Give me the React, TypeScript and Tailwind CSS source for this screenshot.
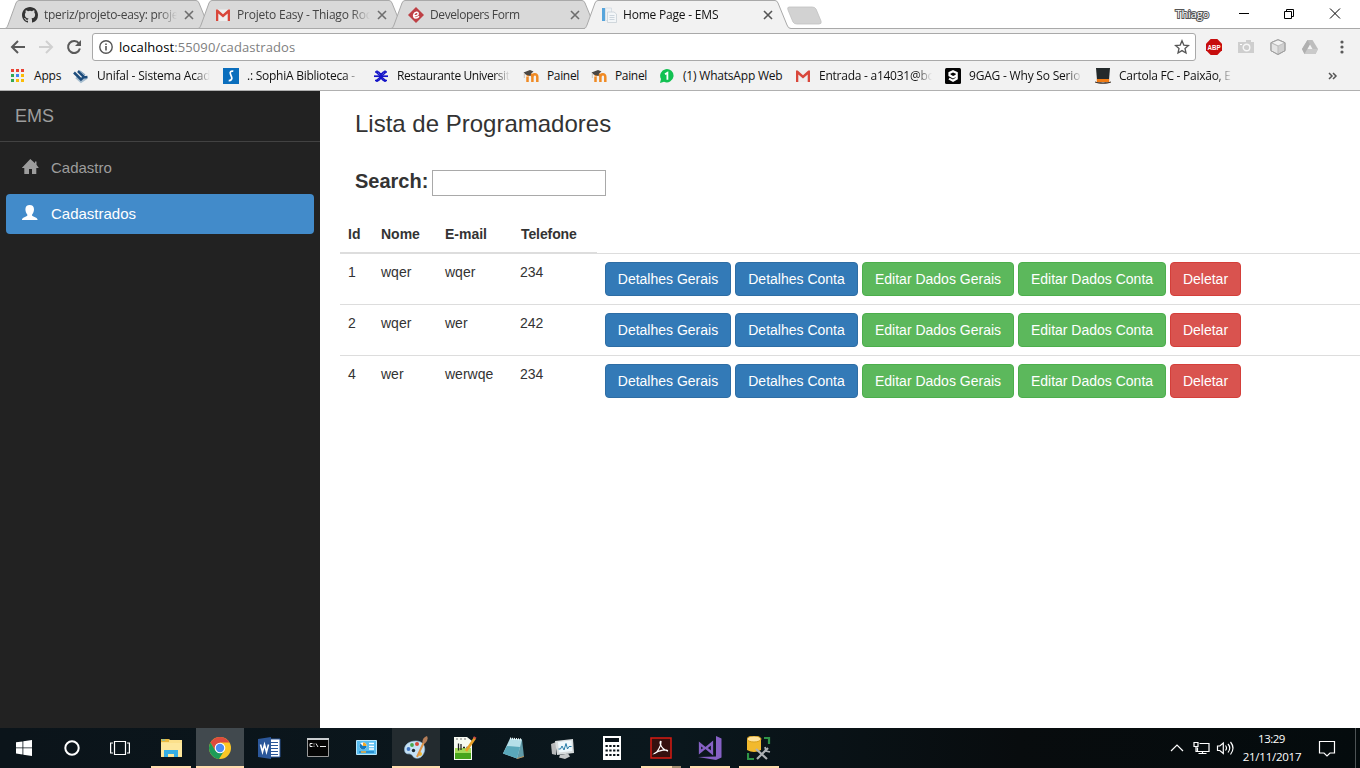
import type { ReactNode } from "react";

const UI = "font-['Open_Sans','Noto_Sans',sans-serif]";
const FADE = "[mask-image:linear-gradient(to_right,black_86%,transparent_100%)]";

/* ---------- favicons ---------- */

function GithubIcon() {
  return (
    <svg width="16" height="16" viewBox="0 0 16 16" fill="#333">
      <path d="M8 0C3.58 0 0 3.58 0 8c0 3.54 2.29 6.53 5.47 7.59.4.07.55-.17.55-.38 0-.19-.01-.82-.01-1.49-2.01.37-2.53-.49-2.69-.94-.09-.23-.48-.94-.82-1.13-.28-.15-.68-.52-.01-.53.63-.01 1.08.58 1.23.82.72 1.21 1.87.87 2.33.66.07-.52.28-.87.51-1.07-1.78-.2-3.64-.89-3.64-3.95 0-.87.31-1.59.82-2.15-.08-.2-.36-1.02.08-2.12 0 0 .67-.21 2.2.82a7.6 7.6 0 0 1 4 0c1.53-1.04 2.2-.82 2.2-.82.44 1.1.16 1.92.08 2.12.51.56.82 1.27.82 2.15 0 3.07-1.87 3.75-3.65 3.95.29.25.54.73.54 1.48 0 1.07-.01 1.93-.01 2.2 0 .21.15.46.55.38A8.01 8.01 0 0 0 16 8c0-4.42-3.58-8-8-8z" />
    </svg>
  );
}

function GmailIcon() {
  return (
    <svg width="16" height="16" viewBox="0 0 16 16">
      <path d="M1 2.500h14v11.500H1z" fill="#eee" />
      <path d="M1 14V2.500h1.700L8 7.200l5.300-4.700H15V14h-2.300V6.400L8 10.500 3.300 6.400V14z" fill="#d9473b" />
    </svg>
  );
}

function DiamondIcon() {
  return (
    <svg width="16" height="16" viewBox="0 0 16 16">
      <path d="M8 0l8 8-8 8-8-8z" fill="#be4045" />
      <path d="M5.600 8.700c2.400.3 4.900-.5 4.600-2.400-.3-1.600-3.200-1.200-4.200.8-1 2 0 4 2 3.900 1.300-.1 2.300-.9 3-1.700" fill="none" stroke="#fff" strokeWidth="1.500" />
    </svg>
  );
}

function PageIcon() {
  return (
    <svg width="16" height="16" viewBox="0 0 16 16">
      <path d="M1 1h3v13H1z" fill="#56a5dc" />
      <path d="M4.500 1h6v12.500h-6z" fill="#eef2f5" stroke="#d3dbe2" strokeWidth=".8" />
      <path d="M6.500 5H13l2.500 2v8.500h-9z" fill="#f3f6f8" stroke="#c6cfd6" strokeWidth=".8" />
      <path d="M8.500 8.500h5M8.500 10.500h5M8.500 12.500h5" stroke="#ccd5dd" />
    </svg>
  );
}

function AppsIcon() {
  const colors = ["#ea4335", "#ea4335", "#ea4335", "#34a853", "#4285f4", "#fbbc05", "#34a853", "#fbbc05", "#fbbc05"];
  return (
    <svg width="16" height="16" viewBox="0 0 16 16">
      {colors.map((c, i) => (
        <rect key={i} x={1 + (i % 3) * 5} y={1 + Math.floor(i / 3) * 5} width="3" height="3" fill={c} />
      ))}
    </svg>
  );
}

function UnifalIcon() {
  return (
    <svg width="16" height="16" viewBox="0 0 16 16">
      <path d="M3 9.500l5 4.500 6-4" fill="none" stroke="#a9bfd0" strokeWidth="2" />
      <path d="M1 4.500l7 7 3-2.500-6-6M10 9.500L14.500 9" fill="none" stroke="#1d4c7c" strokeWidth="2.500" />
      <path d="M7 3l5 4" stroke="#7d9db8" strokeWidth="1.200" />
    </svg>
  );
}

function SophiaIcon() {
  return (
    <svg width="16" height="16" viewBox="0 0 16 16">
      <path d="M0 0h16v16H0z" fill="#0a6ebd" />
      <path d="M10.300 3.200C8 2.600 6.600 4 7.400 6l1.300 3.200c.6 1.800-.6 3.500-3 3.400" fill="none" stroke="#fff" strokeWidth="1.700" />
    </svg>
  );
}

function RestaurantIcon() {
  return (
    <svg width="16" height="16" viewBox="0 0 16 16" stroke="#1414c8" fill="none">
      <path d="M2 4h3.500L8 6.500 10.500 4H14M2 12.500h3.500L8 10l2.500 2.500H14" strokeWidth="1.700" />
      <path d="M4 2.500v2.500l8 7v2M12 2.500v2.500l-8 7v2" strokeWidth="1.600" />
      <path d="M1 8.200h14" strokeWidth="1.700" />
    </svg>
  );
}

function MoodleIcon() {
  return (
    <svg width="16" height="16" viewBox="0 0 16 16">
      <path d="M4.500 14V8.500M9.400 14V9M14.300 14V9c0-4-4.900-3.500-4.900 0 0-3.500-4.200-3.500-4.900-1" fill="none" stroke="#f08a24" strokeWidth="2.500" />
      <path d="M.5 4.500L7 2l3.500 1.500L8 5.500 7.500 8 3 6.800z" fill="#4a4744" />
      <path d="M1.300 5v5" stroke="#c5b9aa" strokeWidth=".8" />
    </svg>
  );
}

function WhatsAppIcon() {
  return (
    <svg width="16" height="16" viewBox="0 0 16 16">
      <path d="M1 15l1-4A6.700 6.700 0 1 1 5 13.800z" fill="#12c152" />
      <path d="M6 6.300l2.400-1.500V11.700" fill="none" stroke="#fff" strokeWidth="1.800" />
    </svg>
  );
}

function NineGagIcon() {
  return (
    <svg width="16" height="16" viewBox="0 0 16 16">
      <rect width="16" height="16" rx="1.500" fill="#050505" />
      <path d="M11.700 7.500L8 9.200 4.500 7.300V5L8 3.200 11.700 5v5.500L8 12.700 4 10.600" fill="none" stroke="#fff" strokeWidth="2.200" />
    </svg>
  );
}

function HatIcon() {
  return (
    <svg width="16" height="16" viewBox="0 0 16 16">
      <path d="M1 0h14l-1 12H2z" fill="#242a2b" />
      <path d="M1.800 11h12.400v3H1.800z" fill="#f07a12" />
      <path d="M0 13.500c4 1.200 12 1.200 16 0v1c-4 1.800-12 1.800-16 0z" fill="#3a2a20" />
    </svg>
  );
}

/* ---------- tab strip ---------- */

function CloseGlyph({ dark }: { dark?: boolean }) {
  return (
    <svg width="10" height="10" viewBox="0 0 10 10" stroke={dark ? "#555" : "#6e6e6e"} strokeWidth="1.600">
      <path d="M1 1l8 8M9 1L1 9" />
    </svg>
  );
}

function Tab({ icon, title, active, tracking }: { icon: ReactNode; title: string; active?: boolean; tracking: string }) {
  return (
    <div className={`relative h-[29px] w-[193px] shrink-0 ${active ? "z-10" : ""}`}>
      <svg className="absolute left-0 top-0 overflow-visible" width="206" height="29">
        <path
          d="M-1 29 C1 28 1 27 2 25 L10 3 Q11 .5 13 .5 H190 Q192 .5 193 3 L202 25 Q203 28.500 206 28.500 V29z"
          fill={active ? "#f2f2f2" : "#d9d9d9"}
        />
        <path
          d="M-1 28.500 C1 28 1 27 2 25 L10 3 Q11 .5 13 .5 H190 Q192 .5 193 3 L202 25 Q203 28.500 206 28.500"
          fill="none"
          stroke="#a9a9a9"
        />
        {!active && <path d="M0 28.500H206" stroke="#a9a9a9" />}
      </svg>
      <div className="relative flex h-[29px] items-center pl-4 pt-px">
        {icon}
        <span className={`ml-1.5 w-[133px] whitespace-nowrap text-[12px] ${tracking} ${FADE} ${active ? "text-[#111]" : "text-[#444]"}`}>
          {title}
        </span>
        <span className="ml-[7px]">
          <CloseGlyph dark={active} />
        </span>
      </div>
    </div>
  );
}

function TabStrip() {
  return (
    <div className="flex h-[29px] border-b border-[#a9a9a9] bg-white pl-[6px]">
      <Tab icon={<GithubIcon />} title="tperiz/projeto-easy: proje" tracking="tracking-[-0.28px]" />
      <Tab icon={<GmailIcon />} title="Projeto Easy - Thiago Roc" tracking="tracking-[-0.22px]" />
      <Tab icon={<DiamondIcon />} title="Developers Form" tracking="tracking-[-0.4px]" />
      <Tab icon={<PageIcon />} title="Home Page - EMS" tracking="tracking-[-0.2px]" active />
      <svg className="ml-[9px] mt-[6px]" width="36" height="20" viewBox="0 0 36 20">
        <path d="M2 1h23q3 0 4 2l5 12q1 3-2 3H10q-3 0-4-2L1 4q-1-3 1-3z" fill="#d2d2d2" stroke="#c0c0c0" strokeWidth=".8" />
      </svg>
      <div className="ml-auto flex h-[28px] items-center">
        <span className="mr-[30px] text-[11px] tracking-[-0.15px] text-white [-webkit-text-stroke:2px_#555] [paint-order:stroke_fill]">Thiago</span>
        <svg width="121" height="14" viewBox="0 0 121 14" fill="none" stroke="#000">
          <path d="M0 6.500h10M45.500 4.500h7v7h-7zM47.500 4.500v-2h7v7h-2M91 1.500l10 10M101 1.500l-10 10" />
        </svg>
      </div>
    </div>
  );
}

/* ---------- toolbar ---------- */

function Toolbar() {
  return (
    <div className="flex h-[33px] items-center bg-[#f2f2f2] pb-px pl-2.5 pt-1">
      <svg width="16" height="16" viewBox="0 0 16 16" fill="none" stroke="#5a5a5a" strokeWidth="2">
        <path d="M15 8H2.500M8 2L2 8l6 6" />
      </svg>
      <svg className="ml-3" width="16" height="16" viewBox="0 0 16 16" fill="none" stroke="#d0d0d0" strokeWidth="2">
        <path d="M1 8h12.500M8 2l6 6-6 6" />
      </svg>
      <svg className="ml-3" width="16" height="16" viewBox="0 0 16 16" fill="none" stroke="#5a5a5a" strokeWidth="2">
        <path d="M13 4.500A6 6 0 1 0 13.900 9.500" />
        <path d="M15 1v6H9z" fill="#5a5a5a" stroke="none" />
      </svg>
      <div className="ml-[10px] flex h-[28px] w-[1104px] items-center rounded-[3px] border border-[#a9a9a9] bg-white pl-[6px] pr-[5px]">
        <svg width="14" height="14" viewBox="0 0 14 14" fill="none" stroke="#555">
          <circle cx="7" cy="7" r="6.200" strokeWidth="1.400" />
          <path d="M7 6v4.500M7 3.500v1.500" strokeWidth="1.600" />
        </svg>
        <span className="ml-1.5 pt-px text-[13px] tracking-[0.09px] text-[#808080]">
          <span className="text-black">localhost</span>:55090/cadastrados
        </span>
        <svg className="ml-auto" width="16" height="16" viewBox="0 0 16 16" fill="none" stroke="#555" strokeWidth="1.300">
          <path d="M8 1.800l1.800 4.300 4.700.4L11 9.500l1 4.500-4-2.400L4 14l1-4.500L1.500 6.500l4.700-.4z" />
        </svg>
      </div>
      <div className="ml-[10px] flex gap-4">
        <svg width="16" height="16" viewBox="0 0 16 16">
          <path d="M4.700 0h6.600L16 4.700v6.600L11.300 16H4.700L0 11.300V4.700z" fill="#c70d0d" />
          <text x="8" y="11" textAnchor="middle" textLength="13" lengthAdjust="spacingAndGlyphs" fontFamily="Liberation Sans" fontWeight="bold" fontSize="8" fill="#fff">ABP</text>
        </svg>
        <svg width="16" height="16" viewBox="0 0 16 16">
          <path d="M0 3h8V1h5v2h3v11H0z" fill="#cecece" />
          <circle cx="8.500" cy="8.500" r="3.300" fill="none" stroke="#f7f7f7" strokeWidth="1.400" />
          <path d="M2 5.500h2" stroke="#fff" />
        </svg>
        <svg width="16" height="16" viewBox="0 0 16 16" stroke="#a6a6a6" strokeLinejoin="round">
          <path d="M8 .7l7 3v8L8 15.500l-7-3.800v-8z" fill="#d0d0d0" />
          <path d="M1 3.700l7 3.300 7-3.300L8 .7z" fill="#f2f2f2" stroke="#c0c0c0" />
          <path d="M1 3.700L8 7v8.500l-7-3.800z" fill="#e5e5e5" stroke="#bbb" />
          <path d="M8 .7l7 3v8L8 15.500l-7-3.800v-8z" fill="none" stroke="#a0a0a0" />
        </svg>
        <svg width="16" height="16" viewBox="0 0 16 16">
          <path d="M5.500 1h5l5.500 9-2.500 5h-11L0 10z" fill="#bdbdbd" />
          <path d="M5.500 1L0 10l2.500 5L8 5.500z" fill="#b0b0b0" />
          <path d="M8 5.500l2.500 4.500h-5z" fill="#f2f2f2" />
          <path d="M5.500 10H16l-2.500 5h-11z" fill="#cacaca" />
        </svg>
      </div>
      <svg className="ml-[22px]" width="4" height="16" viewBox="0 0 4 16" fill="#5a5a5a">
        <circle cx="2" cy="3" r="1.600" />
        <circle cx="2" cy="8" r="1.600" />
        <circle cx="2" cy="13" r="1.600" />
      </svg>
    </div>
  );
}

/* ---------- bookmarks ---------- */

const bookmarks: { icon: ReactNode; label: string; slot: string; cut?: boolean; tracking: string }[] = [
  { icon: <AppsIcon />, label: "Apps", slot: "w-[63px]", tracking: "tracking-[-0.2px]" },
  { icon: <UnifalIcon />, label: "Unifal - Sistema Acad", slot: "w-[150px]", cut: true, tracking: "tracking-[-0.2px]" },
  { icon: <SophiaIcon />, label: ".: SophiA Biblioteca -", slot: "w-[150px]", cut: true, tracking: "tracking-[-0.25px]" },
  { icon: <RestaurantIcon />, label: "Restaurante Universit", slot: "w-[150px]", cut: true, tracking: "tracking-[-0.4px]" },
  { icon: <MoodleIcon />, label: "Painel", slot: "w-[68px]", tracking: "tracking-[-0.35px]" },
  { icon: <MoodleIcon />, label: "Painel", slot: "w-[68px]", tracking: "tracking-[-0.35px]" },
  { icon: <WhatsAppIcon />, label: "(1) WhatsApp Web", slot: "w-[136px]", tracking: "tracking-[-0.2px]" },
  { icon: <GmailIcon />, label: "Entrada - a14031@bc", slot: "w-[150px]", cut: true, tracking: "tracking-[-0.25px]" },
  { icon: <NineGagIcon />, label: "9GAG - Why So Serio", slot: "w-[150px]", cut: true, tracking: "tracking-[-0.2px]" },
  { icon: <HatIcon />, label: "Cartola FC - Paixão, E", slot: "w-[150px]", cut: true, tracking: "tracking-[-0.25px]" },
];

function BookmarksBar() {
  return (
    <div className="flex h-[29px] items-center border-b border-[#b0b0b0] bg-[#f2f2f2] pl-[10px] text-[12px] text-[#111]">
      {bookmarks.map((b, i) => (
        <div key={i} className={`flex shrink-0 items-center gap-2 ${b.slot}`}>
          <span className="shrink-0">{b.icon}</span>
          <span className={`whitespace-nowrap ${b.tracking} ${b.cut ? `w-[113px] shrink-0 ${FADE}` : ""}`}>{b.label}</span>
        </div>
      ))}
      <svg className="ml-auto mr-[22px]" width="10" height="8" viewBox="0 0 10 8" fill="none" stroke="#555" strokeWidth="1.500">
        <path d="M1 1l3 3-3 3M5 1l3 3-3 3" />
      </svg>
    </div>
  );
}

/* ---------- page ---------- */

function Sidebar() {
  return (
    <nav className="w-[320px] shrink-0 bg-[#222]">
      <div className="flex h-[51px] items-center border-b border-[#424242] pl-[15px] text-[18px] text-[#9d9d9d]">EMS</div>
      <div className="flex flex-col gap-1.5 p-1.5 text-[15px]">
        <a className="flex h-10 items-center pl-4 text-[#9d9d9d]">
          <svg className="-mt-0.5" width="17" height="16" viewBox="0 0 17 16" fill="currentColor">
            <path d="M8.300 0L13 4.300V2.500h1.500v3.300L16.800 9H14.300v6H10V10H7v5H2.300V9H-.2z" />
          </svg>
          <span className="ml-[12px]">Cadastro</span>
        </a>
        <a className="flex h-10 items-center rounded bg-[#428bca] pl-4 text-white">
          <svg className="-mt-0.5" width="16" height="16" viewBox="0 0 16 16" fill="currentColor">
            <path d="M7.700 0C10.500 0 12 1.500 12 4.200c0 2.300-.8 4-1.900 5.200v1.400c1.500 1.200 4.700 1.600 5.400 3.400V15H0v-.8c.7-1.800 3.900-2.200 5.300-3.400V9.400C4.200 8.200 3.400 6.500 3.400 4.200 3.400 1.500 5 0 7.700 0z" />
          </svg>
          <span className="ml-[13px]">Cadastrados</span>
        </a>
      </div>
    </nav>
  );
}

const COLS = "grid grid-cols-[33px_64px_75px_85px_1fr]";
const people = [
  { id: 1, nome: "wqer", email: "wqer", tel: "234" },
  { id: 2, nome: "wqer", email: "wer", tel: "242" },
  { id: 4, nome: "wer", email: "werwqe", tel: "234" },
];
const actions = [
  { label: "Detalhes Gerais", style: "w-[126px] border-[#2e6da4] bg-[#337ab7]" },
  { label: "Detalhes Conta", style: "w-[123px] border-[#2e6da4] bg-[#337ab7]" },
  { label: "Editar Dados Gerais", style: "w-[152px] border-[#4cae4c] bg-[#5cb85c]" },
  { label: "Editar Dados Conta", style: "w-[148px] border-[#4cae4c] bg-[#5cb85c]" },
  { label: "Deletar", style: "w-[71px] border-[#d43f3a] bg-[#d9534f]" },
];

function Content() {
  return (
    <main className="flex-1 pl-5 text-[14px] leading-5 text-[#333]">
      <h3 className="ml-[15px] mt-5 text-[24px] leading-[26px]">Lista de Programadores</h3>
      <div className="ml-[15px] mt-[33px] flex h-[26px] items-center">
        <label className="w-[77px] pb-1 text-[20px] font-bold leading-[22px]">Search:</label>
        <input className="h-[26px] w-[174px] border border-[#a9a9a9] bg-white" />
      </div>
      <div className={`mt-5 font-bold ${COLS}`}>
        {["Id", "Nome", "E-mail", "Telefone"].map((h) => (
          <div key={h} className={`h-[37px] border-b border-[#ddd] pt-2 ${h === "Telefone" ? "pl-[9px] tracking-[-0.1px]" : "pl-2"}`}>{h}</div>
        ))}
      </div>
      {people.map((p) => (
        <div key={p.id} className={`h-[51px] border-t border-[#ddd] pt-2 ${COLS}`}>
          <div className="pl-2">{p.id}</div>
          <div className="pl-2">{p.nome}</div>
          <div className="pl-2">{p.email}</div>
          <div className="pl-2">{p.tel}</div>
          <div className="flex gap-1 pl-2">
            {actions.map((a) => (
              <button key={a.label} className={`h-[34px] whitespace-nowrap rounded border text-white ${a.style}`}>{a.label}</button>
            ))}
          </div>
        </div>
      ))}
    </main>
  );
}

/* ---------- taskbar ---------- */

const taskIcons: { art: ReactNode; hot?: string; bar?: string }[] = [
  {
    bar: "w-10",
    art: (
      <>
        <path d="M2 3h8l1 1h12v17H2z" fill="#fbe08b" />
        <path d="M2 3h8v3H2z" fill="#e9b93f" />
        <path d="M3 4h3" stroke="#4fc3e8" />
        <path d="M2 7h21v13H2z" fill="#fde79c" />
        <path d="M5 21v-7h14v7h-4v-3H9v3z" fill="#35aee4" />
      </>
    ),
  },
  {
    hot: "bg-[#41494e]",
    bar: "w-12",
    art: (
      <>
        <circle cx="12" cy="12" r="11" fill="#fbc727" />
        <path d="M2.500 6.500A11 11 0 0 1 21.500 6.500H12l-4.800 8.300z" fill="#dd4b3e" />
        <path d="M2.500 6.500A11 11 0 0 0 11 23l5.200-8.300L7.200 14.500z" fill="#1e9c58" />
        <circle cx="12" cy="12" r="5.300" fill="#fff" />
        <circle cx="12" cy="12" r="4.200" fill="#4b8cf5" />
      </>
    ),
  },
  {
    art: (
      <>
        <path d="M12 3h11v18H12z" fill="#fff" stroke="#2b579a" />
        <path d="M14 6.500h7M14 9.500h7M14 12.500h7M14 15.500h7M14 18.500h7" stroke="#2b579a" />
        <path d="M1 3l13-2v22L1 21z" fill="#2b579a" />
        <path d="M3.500 8.500l2 7.500 2-7.500 2 7.500 2-7.500" fill="none" stroke="#fff" strokeWidth="1.600" />
      </>
    ),
  },
  {
    art: (
      <>
        <path d="M1.500 3h21v17.500h-21z" fill="#050505" stroke="#9b9b9b" />
        <path d="M1 2h22v2H1z" fill="#c9cdcf" />
        <path d="M6.500 7.500H4v3h2.500M8 7.500v1M8 9.700v1M10 7.500l2 3.500M14 10.500h6" fill="none" stroke="#eee" />
      </>
    ),
  },
  {
    art: (
      <>
        <path d="M1.500 4.500h20v14h-20z" fill="#58bdf0" stroke="#b7e5fa" />
        <circle cx="8" cy="10" r="3.500" fill="#fff" />
        <path d="M8 10V6.500A3.500 3.500 0 0 1 11.500 10z" fill="#f5a623" />
        <path d="M8 10h3.500A3.500 3.500 0 1 1 5.500 7.500z" fill="#1478bd" />
        <path d="M14 7.500h5M14 10.500h5M14 13h5" stroke="#fff" strokeWidth="1.300" />
        <path d="M4 16h15" stroke="#1b82c7" strokeWidth="1.500" />
        <path d="M6 16h5" stroke="#f3b13c" strokeWidth="1.500" />
      </>
    ),
  },
  {
    hot: "bg-[#232b2f]",
    bar: "w-12",
    art: (
      <>
        <path d="M12 5C3 5-1 11 1 16c1.500 3 5 1 7 3 2 4 6 4 9 2 6-5 5-16-5-16z" fill="#c6e2f5" stroke="#93bcd9" strokeWidth=".6" />
        <circle cx="4.500" cy="13" r="1.900" fill="#4276c4" />
        <circle cx="8" cy="9" r="1.900" fill="#46a84b" />
        <circle cx="13" cy="8" r="2" fill="#d54a3a" />
        <circle cx="9.500" cy="14.500" r="1.700" fill="#1b2830" />
        <circle cx="16" cy="18" r="2" fill="#f0b730" />
        <path d="M13 21l7-15" stroke="#dc9448" strokeWidth="2" />
        <path d="M18.500 6.500Q18 2 23 0q2 4-2 7.500z" fill="#b47d58" />
      </>
    ),
  },
  {
    art: (
      <>
        <path d="M1 1h13l5 4v19H1z" fill="#f7faf2" />
        <path d="M2 12h16v11H2z" fill="#a6dc5a" />
        <path d="M2 17h16v6H2z" fill="#47a51d" />
        <path d="M5.500 7.500v7M8 8v6M10 11.500h2M13.500 11.500h2" fill="none" stroke="#222" strokeWidth="1.300" />
        <path d="M3 3h2M7 3h2M11 3h2" stroke="#777" />
        <path d="M22 2l-9 13" stroke="#eaa128" strokeWidth="2.600" />
        <path d="M20.500 1l2.500 1.500" stroke="#c84a46" strokeWidth="2" />
      </>
    ),
  },
  {
    art: (
      <>
        <path d="M8 2.500l12 1 2 17-7 2.500z" fill="#5f9aa8" />
        <path d="M8 2.500l12 1-5 19-14-5z" fill="#b6dfe8" />
        <path d="M5 10l13 1-3 11.500-14-5z" fill="#5aa8ba" />
        <path d="M8 2.500l12 1" stroke="#eef6f7" strokeWidth="2" strokeDasharray="1 1" />
        <path d="M15 22.500l7-2" stroke="#b6905b" />
      </>
    ),
  },
  {
    art: (
      <>
        <path d="M0 8l5-2v13l-4-1z" fill="#b8babb" />
        <path d="M4 5l18-2 1 14-17 2z" fill="#d7dcdd" />
        <path d="M7 6l13.500-1.500.7 10.500L8 16.500z" fill="#eef8fc" />
        <path d="M7.500 13h2l1.500-3 2 4 2-6.500 1.500 5.500 1.500-2.500h2.500" fill="none" stroke="#267ca8" />
        <path d="M9 19l8-1.500 2 3-5 2.500-6-1.500z" fill="#c5c8c9" />
      </>
    ),
  },
  {
    art: (
      <>
        <path d="M3 0h18v24H3z" fill="#fff" />
        <path d="M5 2h14v4H5z" fill="#091218" />
        <path d="M5.500 10h14M5.500 14.500h14M5.500 19h14" stroke="#091218" strokeWidth="2.200" strokeDasharray="2.300 1.500" />
      </>
    ),
  },
  {
    bar: "w-10",
    art: (
      <>
        <path d="M2 2h20v20H2z" fill="#35100f" stroke="#d81b13" strokeWidth="1.500" />
        <path d="M5.500 17.500c2.500-.5 7-8 6.500-12-2-1-1 7 6.500 9.500 1-2-9-1-13 2.500z" fill="none" stroke="#fff" strokeWidth="1.200" />
      </>
    ),
  },
  {
    bar: "w-10",
    art: (
      <>
        <path d="M18 0l5.500 2.500v19L18 24 0 21l18-.5z" fill="#8661c5" />
        <path d="M2 8v8l5-4zM14 7v10l-6-5z" fill="none" stroke="#8661c5" strokeWidth="2.300" />
      </>
    ),
  },
  {
    bar: "w-10",
    art: (
      <>
        <path d="M0 3v11q7 4 14 0V3z" fill="#f2b92d" />
        <ellipse cx="7" cy="3" rx="7" ry="3" fill="#ffe29a" stroke="#dba31e" />
        <path d="M17 2h5v6M1 17v6h6" fill="none" stroke="#2f9447" strokeWidth="2.200" />
        <path d="M9 13l11 10M21 12l-3 3-8 8" fill="none" stroke="#aeb2b5" strokeWidth="2.200" />
        <path d="M18 11l1 4 4 1" fill="none" stroke="#aeb2b5" strokeWidth="1.700" />
      </>
    ),
  },
];

function Taskbar() {
  return (
    <footer className="flex h-10 shrink-0 bg-[linear-gradient(90deg,#0b141a,#0a171d_50%,#080c0e_75%,#040b0d)] text-white">
      <div className="flex w-[147px] items-center">
        <svg className="ml-4" width="16" height="16" viewBox="0 0 16 16" fill="#fff">
          <path d="M0 2.300l6.500-.9v6.100H0zM7.300 1.300L16 0v7.500H7.300zM0 8.300h6.500v6.200L0 13.600zM7.300 8.300H16V16l-8.700-1.300z" />
        </svg>
        <svg className="ml-8" width="16" height="16" viewBox="0 0 16 16" fill="none" stroke="#fff" strokeWidth="2">
          <circle cx="8" cy="8" r="6.700" />
        </svg>
        <svg className="ml-[30px]" width="20" height="16" viewBox="0 0 20 16" fill="none" stroke="#fff" strokeWidth="1.200">
          <path d="M4.500 1.500h11v13h-11zM3 3H.6v10H3M17 3h2.400v10H17" />
        </svg>
      </div>
      <div className="flex gap-px">
        {taskIcons.map((t, i) => (
          <div key={i} className={`flex h-10 w-12 flex-col items-center pt-2 ${t.hot ?? ""}`}>
            <svg width="24" height="24" viewBox="0 0 24 24">{t.art}</svg>
            {t.bar && (
              <div className={`mt-auto flex h-0.5 justify-end bg-[#ffdcae] ${t.bar}`}>
                {i === 10 && <div className="h-0.5 w-[9px] bg-[#a48e70]" />}
              </div>
            )}
          </div>
        ))}
      </div>
      <div className="ml-auto flex items-center">
        <svg width="66" height="20" viewBox="0 0 66 20" fill="none" stroke="#fff" strokeWidth="1.200">
          <path d="M1 13l6-6 6 6" />
          <path d="M29.500 5.500H39v8H27.500v-4M28.500 15.500h8M32.500 13.500v2M24 4.500h4v4h-4zM26 8.500v5h2" />
          <path d="M47.500 8v4.500h2.300l3.500 3V5l-3.500 3zM55.500 7.500q2 2.500 0 5M58 6q3.500 4 0 8.500M60.500 4q5 6 0 12.500" />
        </svg>
        <div className="ml-[6px] w-[60px] text-center text-[11.5px] leading-[18px] tracking-[-0.25px]">
          <div className="-ml-px tracking-[-0.5px]">13:29</div>
          <div className="whitespace-nowrap">21/11/2017</div>
        </div>
        <svg className="ml-[16px]" width="18" height="18" viewBox="0 0 18 18" fill="none" stroke="#fff" strokeWidth="1.200">
          <path d="M1.500 2.500h15v11.500h-4.500l-3 3-3-3H1.500z" />
        </svg>
        <div className="ml-[19px] mr-1 h-10 w-px bg-[#4d5355]" />
      </div>
    </footer>
  );
}

export default function App() {
  return (
    <div className="flex h-[768px] w-[1360px] flex-col overflow-hidden bg-white">
      <header className={`shrink-0 ${UI}`}>
        <TabStrip />
        <Toolbar />
        <BookmarksBar />
      </header>
      <div className="flex min-h-0 flex-1 font-['Liberation_Sans',Arial,sans-serif]">
        <Sidebar />
        <Content />
      </div>
      <div className={UI}>
        <Taskbar />
      </div>
    </div>
  );
}
